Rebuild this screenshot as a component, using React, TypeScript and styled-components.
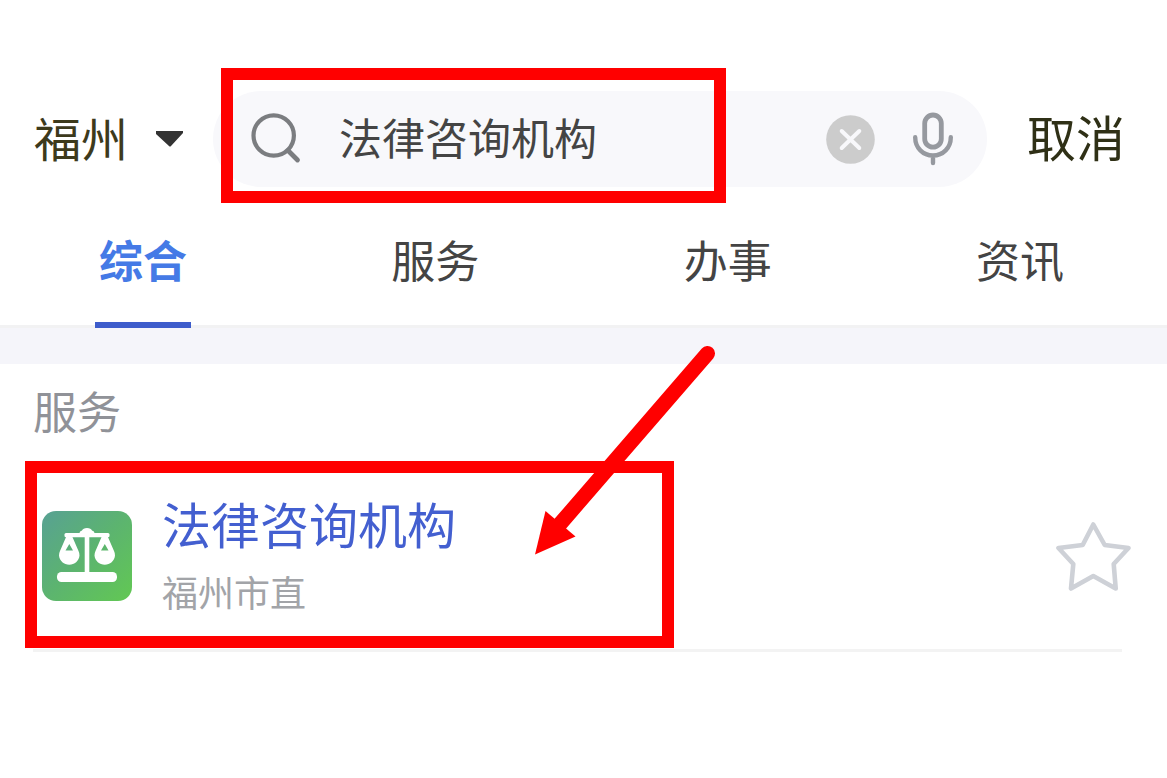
import React, { useState } from 'react';
import styled, { createGlobalStyle } from 'styled-components';

const GlobalStyle = createGlobalStyle`
  * { box-sizing: border-box; }
  body {
    margin: 0;
    background: #fff;
    font-family: "Noto Sans CJK SC", "Noto Sans", sans-serif;
  }
  button, input {
    font-family: inherit;
    margin: 0;
    padding: 0;
    border: 0;
    background: none;
  }
  button { cursor: pointer; }
  svg { display: block; flex: none; }
`;

const Page = styled.main`
  width: 100%;
`;

const SearchHeader = styled.header`
  display: flex;
  align-items: center;
  padding: 91px 42px 0 34px;
`;

const CityButton = styled.button`
  display: flex;
  align-items: center;
  justify-content: space-between;
  width: 149px;
  margin-right: 30px;
  font-size: 47px;
  line-height: 64px;
  color: #3d3a1c;
  white-space: nowrap;
`;

const CityName = styled.span`
  padding-bottom: 4px;
`;

const CancelButton = styled.button`
  margin-left: 40px;
  padding-bottom: 6px;
  font-size: 49px;
  line-height: 64px;
  color: #2f3016;
  white-space: nowrap;
`;

const SearchBox = styled.form`
  position: relative;
  display: flex;
  align-items: center;
  flex: 1;
  min-width: 0;
  height: 96px;
  padding: 0 34px 0 37px;
  border-radius: 48px;
  background: #f8f8fb;
`;

const SearchInput = styled.input`
  flex: 1;
  min-width: 0;
  height: 70px;
  margin: 0 24px 0 37px;
  padding-bottom: 6px;
  font-size: 43px;
  color: #444;
  outline: none;
`;

const IconButton = styled.button<{ $gap?: number }>`
  margin-left: ${(p) => p.$gap ?? 0}px;
`;

const Tabs = styled.nav`
  display: flex;
  justify-content: space-between;
  padding: 0 99px 0 95px;
  border-bottom: 3px solid #f2f2f3;
`;

const Tab = styled.button<{ $active: boolean }>`
  width: 96px;
  margin-bottom: -3px;
  padding: 40px 0 31px;
  border-bottom: 6px solid ${(p) => (p.$active ? '#3d5ccb' : 'transparent')};
  font-size: 44px;
  line-height: 64px;
  font-weight: ${(p) => (p.$active ? 700 : 400)};
  color: ${(p) => (p.$active ? '#457ae6' : '#444')};
  white-space: nowrap;
`;

const Results = styled.section`
  border-top: 36px solid #f5f5fa;
`;

const SectionTitle = styled.h2`
  margin: 0;
  padding: 14px 33px 19px;
  font-size: 44px;
  line-height: 64px;
  font-weight: 400;
  color: #909298;
`;

const ResultRow = styled.article`
  position: relative;
  display: flex;
  align-items: center;
  margin: 0 45px 0 33px;
  padding: 30px 0 28px 9px;
  border-bottom: 3px solid #f3f3f3;
`;

const ResultText = styled.div`
  display: flex;
  flex-direction: column;
  flex: 1;
  gap: 12px;
  min-width: 0;
  margin-left: 30px;
  padding-bottom: 6px;
`;

const ResultLink = styled.a`
  font-size: 49px;
  line-height: 64px;
  color: #435fd0;
  text-decoration: none;
`;

const ResultSource = styled.span`
  font-size: 36px;
  line-height: 48px;
  color: #a2a4a8;
`;

const FavoriteButton = styled.button`
  margin-right: -9px;
`;

const Highlight = styled.div`
  position: absolute;
  border: 12px solid #f00;
  pointer-events: none;
`;

const SearchHighlight = styled(Highlight)`
  top: -23px;
  left: 8px;
  width: 505px;
  height: 135px;
`;

const ResultHighlight = styled(Highlight)`
  top: 0;
  left: -8px;
  width: 649px;
  height: 187px;
`;

const PointerArrow = styled.svg`
  position: absolute;
  top: -121px;
  left: 497px;
  pointer-events: none;
`;

const CaretIcon = () => (
  <svg width="27" height="16" viewBox="0 0 27 16" aria-hidden="true">
    <path d="M0 0H27V2L15 15Q14 16 13 15L0 3Z" fill="#333" />
  </svg>
);

const SearchIcon = () => (
  <svg width="52" height="52" viewBox="0 0 52 52" fill="none" stroke="#7b7d80" aria-hidden="true">
    <circle cx="23.700" cy="22.500" r="20.200" strokeWidth="4.200" />
    <path d="M38 37.500 47.500 47" strokeWidth="4.800" strokeLinecap="round" />
  </svg>
);

const ClearIcon = () => (
  <svg width="49" height="49" viewBox="0 0 49 49" aria-hidden="true">
    <circle cx="24.500" cy="24.500" r="24.300" fill="#ccc" />
    <path d="M15.700 16 33.300 33M33.300 16 15.700 33" stroke="#f8f8fb" strokeWidth="4" strokeLinecap="round" />
  </svg>
);

const MicIcon = () => (
  <svg width="40" height="54" viewBox="0 0 40 54" fill="none" stroke="#96999f" strokeLinecap="round" aria-hidden="true">
    <rect x="11.700" y="3" width="16.600" height="32.200" rx="8.300" strokeWidth="4.800" />
    <path d="M2.200 25.200C2.200 36 10 43.500 20 43.500S37.800 36 37.800 25.200M20 44V51" strokeWidth="4.400" />
  </svg>
);

const ScalesIcon = () => (
  <svg width="90" height="90" viewBox="0 0 90 90" aria-hidden="true">
    <defs>
      <linearGradient id="tile" x1="0" y1="0" x2="1" y2="1">
        <stop offset="0" stopColor="#58a193" />
        <stop offset="0.500" stopColor="#5cb46f" />
        <stop offset="1" stopColor="#62c853" />
      </linearGradient>
    </defs>
    <rect width="90" height="90" rx="14" fill="url(#tile)" />
    <g fill="#fff">
      <rect x="15" y="61" width="60" height="10" rx="4.500" />
      <rect x="42.700" y="20" width="4.600" height="42" />
      <rect x="22.500" y="22" width="45" height="4.200" rx="1.500" />
      <path d="M37.500 24V22Q37.500 20 40 19.500Q41 17 45 17T50 19.500Q52.500 20 52.500 22V24Z" />
      <path
        fillRule="evenodd"
        d="M24.500 25H30L36.500 40Q37.500 42 37.500 44.500C37 50 32.500 53.700 27.300 53.700S17.500 50 17 44.500Q17 42 18 40ZM27.300 33 23.500 39.500H31Z"
      />
      <path
        fillRule="evenodd"
        d="M60 25H65.500L72 40Q73 42 73 44.500C72.500 50 68 53.700 62.800 53.700S53 50 52.500 44.500Q52.500 42 53.500 40ZM62.800 33 59 39.500H66.500Z"
      />
    </g>
  </svg>
);

const StarIcon = () => (
  <svg width="75" height="72" viewBox="0 0 75 72" fill="none" aria-hidden="true">
    <path
      d="M37.300 4.500 48.700 25 72.500 28 57.700 44 59.700 68.500 37.300 56 15 68.500 17.300 44 2.500 28 26.700 25Z"
      stroke="#ced1d7"
      strokeWidth="4.600"
      strokeLinejoin="round"
    />
  </svg>
);

const TABS = ['综合', '服务', '办事', '资讯'];

export default function App() {
  const [query, setQuery] = useState('法律咨询机构');
  const [active, setActive] = useState(TABS[0]);

  return (
    <Page>
      <GlobalStyle />
      <SearchHeader>
        <CityButton type="button">
          <CityName>福州</CityName>
          <CaretIcon />
        </CityButton>
        <SearchBox role="search" onSubmit={(e) => e.preventDefault()}>
          <SearchIcon />
          <SearchInput
            type="text"
            aria-label="搜索"
            value={query}
            onChange={(e) => setQuery(e.target.value)}
          />
          <IconButton type="button" aria-label="清除" onClick={() => setQuery('')}>
            <ClearIcon />
          </IconButton>
          <IconButton type="button" aria-label="语音" $gap={38}>
            <MicIcon />
          </IconButton>
          <SearchHighlight />
        </SearchBox>
        <CancelButton type="button">取消</CancelButton>
      </SearchHeader>

      <Tabs>
        {TABS.map((tab) => (
          <Tab key={tab} type="button" $active={tab === active} onClick={() => setActive(tab)}>
            {tab}
          </Tab>
        ))}
      </Tabs>

      <Results>
        <SectionTitle>服务</SectionTitle>
        <ResultRow>
          <ScalesIcon />
          <ResultText>
            <ResultLink href="#">法律咨询机构</ResultLink>
            <ResultSource>福州市直</ResultSource>
          </ResultText>
          <FavoriteButton type="button" aria-label="收藏">
            <StarIcon />
          </FavoriteButton>
          <ResultHighlight />
          <PointerArrow width="190" height="220" viewBox="0 0 190 220" aria-hidden="true">
            <path d="M177.500 13.500 30 184" stroke="#f00" strokeWidth="15" strokeLinecap="round" />
            <path d="M5 214.500 15.500 171 45.500 196.500Z" fill="#f00" />
          </PointerArrow>
        </ResultRow>
      </Results>
    </Page>
  );
}
